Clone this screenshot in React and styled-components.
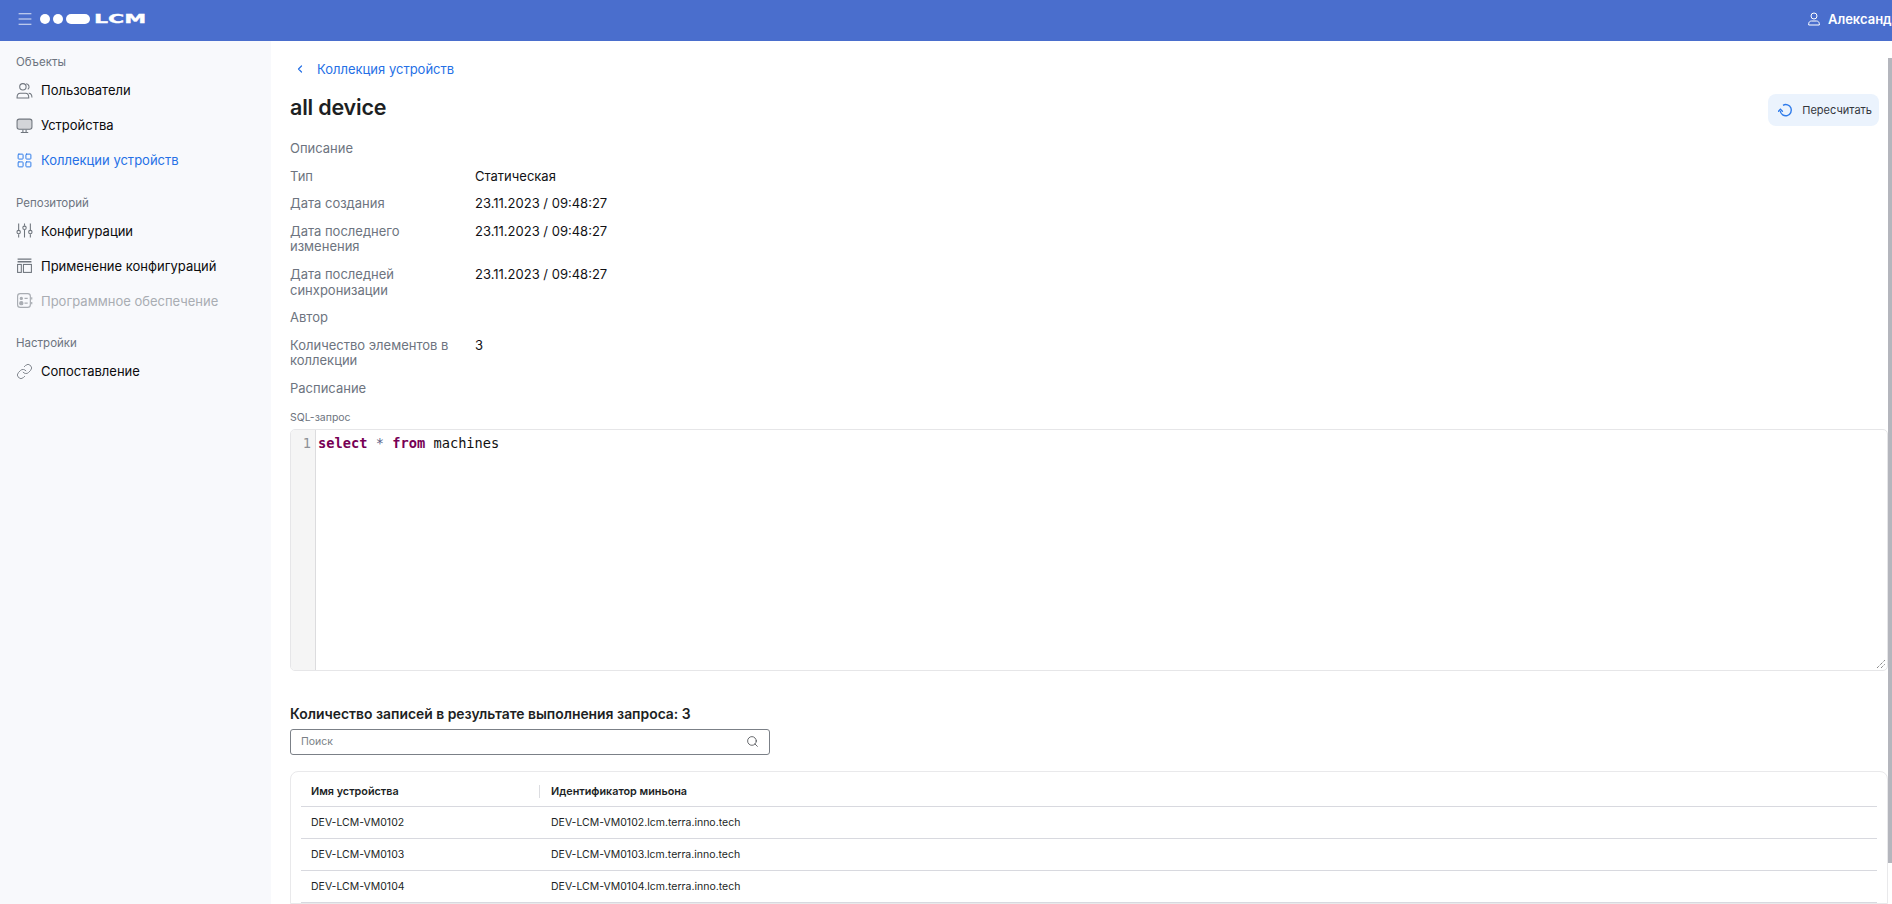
import { Fragment } from "react";
import styled, { createGlobalStyle } from "styled-components";
import { ChevronLeft, LayoutGrid, Link, Menu, Search } from "lucide-react";

const GlobalStyle = createGlobalStyle`
  html, body {
    margin: 0;
    height: 100%;
    overflow: hidden;
    background: #fff;
    font-family: Inter, "Noto Sans", sans-serif;
  }
`;

const Page = styled.div`
  display: flex;
  flex-direction: column;
  height: 904px;
  overflow: hidden;
`;

const TopBar = styled.header`
  flex: none;
  display: flex;
  justify-content: space-between;
  align-items: center;
  box-sizing: border-box;
  height: 41px;
  padding: 0 0 4px 16px;
  background: #4a6ecd;
  color: #fff;
  white-space: nowrap;
`;

const Brand = styled.div`
  display: flex;
  align-items: center;
  gap: 6px;
`;

const LogoMark = styled.div`
  display: flex;
  align-items: center;
  gap: 3px;
`;

const LogoDot = styled.span`
  width: ${(p) => p.$w}px;
  height: 10px;
  border-radius: 5px;
  background: #fff;
`;

const LogoText = styled.span`
  width: 34px;
  margin-left: 1px;
  font-family: "DejaVu Sans", sans-serif;
  font-size: 13px;
  font-weight: 700;
  line-height: 12px;
  -webkit-text-stroke: 0.3px #fff;
  transform: scaleX(1.7);
  transform-origin: left center;
`;

const UserBox = styled.div`
  display: flex;
  align-items: center;
  gap: 8px;
  width: 84px;
  overflow: hidden;
  font-size: 13px;
  font-weight: 600;

  svg {
    flex: none;
  }
`;

const Body = styled.div`
  flex: 1;
  display: flex;
  min-height: 0;
`;

const Sidebar = styled.aside`
  flex: none;
  width: 271px;
  box-sizing: border-box;
  padding: 14px 16px 0;
  background: #f8f9fc;
`;

const SectionLabel = styled.div`
  margin-bottom: 3.5px;
  color: #6d7480;
  font-size: 11.5px;
  line-height: 14px;
`;

const NavList = styled.nav`
  display: flex;
  flex-direction: column;
  margin-bottom: 18px;
`;

const NavItem = styled.a`
  display: flex;
  align-items: center;
  gap: 8px;
  height: 35px;
  color: ${(p) => (p.$active ? "#2570e6" : p.$disabled ? "#a9adb3" : "#0b0b0c")};
  font-size: 13px;
  white-space: nowrap;

  svg {
    flex: none;
    width: 17px;
    height: 17px;
    color: ${(p) => (p.$active ? "#2f7bea" : p.$disabled ? "#a9adb3" : "#6f757d")};
  }
`;

const Main = styled.main`
  flex: 1;
  display: flex;
  min-width: 0;
  background: #fff;
`;

const Content = styled.div`
  flex: 1;
  min-width: 0;
  padding: 19px 0 0 19px;
`;

const ScrollTrack = styled.div`
  flex: none;
  width: 4px;
  padding-top: 17px;
`;

const ScrollThumb = styled.div`
  height: 805px;
  background: #b4b6bd;
`;

const BackLink = styled.a`
  display: flex;
  align-items: center;
  gap: 11px;
  height: 18px;
  padding-left: 4px;
  color: #2570e6;
  font-size: 13px;
`;

const TitleRow = styled.div`
  display: flex;
  justify-content: space-between;
  align-items: flex-start;
  height: 51px;
  margin-top: 12px;
`;

const Title = styled.h1`
  margin: 0;
  padding-top: 1px;
  color: #1d1f23;
  font-size: 21.5px;
  font-weight: 600;
  line-height: 32px;
  letter-spacing: -0.2px;
`;

const RecalcButton = styled.button`
  display: flex;
  align-items: center;
  gap: 9px;
  height: 32px;
  margin: 4px 9px 0 0;
  padding: 0 7px 0 10px;
  border: 0;
  border-radius: 8px;
  background: #ebf3fd;
  color: #33373d;
  font-family: inherit;
  font-size: 11px;
  white-space: nowrap;
`;

const Details = styled.dl`
  display: grid;
  grid-template-columns: 185px 1fr;
  row-gap: 12px;
  margin: 0;
  font-size: 13px;
  line-height: 15.6px;
`;

const Term = styled.dt`
  width: 165px;
  color: #6d7480;
`;

const Value = styled.dd`
  margin: 0;
  color: #111215;
`;

const FieldLabel = styled.div`
  margin: 14px 0 5px;
  color: #6d7480;
  font-size: 10.5px;
  line-height: 13px;
`;

const Editor = styled.div`
  position: relative;
  display: flex;
  box-sizing: border-box;
  height: 242px;
  border: 1px solid #e6e6e8;
  border-radius: 5px;
  overflow: hidden;
`;

const Gutter = styled.div`
  flex: none;
  width: 20px;
  padding: 5px 4px 0 0;
  box-sizing: content-box;
  border-right: 1px solid #dcdcde;
  background: #f5f5f5;
  color: #8d9196;
  font-family: "DejaVu Sans Mono", monospace;
  font-size: 13.7px;
  line-height: 17px;
  text-align: right;
`;

const Code = styled.pre`
  margin: 0;
  padding: 5px 0 0 2px;
  color: #111;
  font-family: "DejaVu Sans Mono", monospace;
  font-size: 13.7px;
  line-height: 17px;
`;

const Keyword = styled.b`
  color: #770055;
`;

const Operator = styled.span`
  color: #5a5f88;
`;

const ResizeGrip = styled.svg`
  position: absolute;
  right: 1px;
  bottom: 1px;
`;

const SectionTitle = styled.h2`
  margin: 34px 0 6px;
  color: #1d1f23;
  font-size: 13.9px;
  font-weight: 600;
  line-height: 18px;
`;

const SearchBox = styled.label`
  display: flex;
  justify-content: space-between;
  align-items: center;
  box-sizing: border-box;
  width: 480px;
  height: 26px;
  padding: 0 10px;
  border: 1px solid #7b8087;
  border-radius: 3px;
  color: #7a7f86;
  font-size: 10.5px;

  svg {
    color: #3a3d42;
  }
`;

const TablePanel = styled.section`
  margin-top: 16px;
  padding: 0 10px;
  border: 1px solid #e9e9eb;
  border-radius: 8px 8px 0 0;
`;

const TableRow = styled.div`
  display: grid;
  grid-template-columns: 238px 1fr;
  align-items: center;
  box-sizing: border-box;
  height: ${(p) => (p.$head ? "35px" : "32px")};
  padding-top: ${(p) => (p.$head ? "6px" : "1px")};
  border-bottom: 1px solid #d8d9df;
  color: #1c1f25;
  font-size: ${(p) => (p.$head ? "10.8px" : "10.5px")};
  font-weight: ${(p) => (p.$head ? 600 : 400)};
`;

const Cell = styled.div`
  padding-left: ${(p) => (p.$wide ? "11px" : "10px")};
  line-height: 13px;
  border-left: 1px solid ${(p) => (p.$divider ? "#dcdde1" : "transparent")};
  margin-left: ${(p) => (p.$wide ? "0" : "-1px")};
`;

const UsersIcon = () => (
  <svg viewBox="0 0 16 16" fill="none" stroke="currentColor" strokeWidth="1">
    <circle cx="6.5" cy="4.5" r="3" />
    <path d="M9.5 1.6a3 3 0 0 1 1.6 5.4M1 14.5c0-2.5 1.5-4 3-4h5c1.5 0 3 1.5 3 4v.5H1zM12 10.5c1.6 0 3 1.5 3 4" />
  </svg>
);

const MonitorIcon = () => (
  <svg viewBox="0 0 16 16" fill="none" stroke="currentColor">
    <rect x="1" y="2" width="14" height="9.5" rx="2" fill="#d3d5d9" />
    <path d="M6.5 12v2.5M9.5 12v2.5M4.5 14.5h7" />
  </svg>
);

const SlidersIcon = () => (
  <svg viewBox="0 0 16 16" fill="none" stroke="currentColor" strokeWidth="1">
    <circle cx="2.5" cy="9.5" r="1.6" />
    <circle cx="8" cy="5.5" r="1.6" />
    <circle cx="13.5" cy="9.5" r="1.6" />
    <path d="M2.5 1.5v6M2.5 11.5v3M8 1.5v2M8 7.5v7M13.5 1.5v6M13.5 11.5v3" />
  </svg>
);

const ApplyIcon = () => (
  <svg viewBox="0 0 16 16" fill="none" stroke="currentColor" strokeWidth="1">
    <path d="M1.5 2h13M1.5 4.5h13" strokeWidth="1.4" />
    <rect x="1.5" y="7" width="3.5" height="7.5" />
    <rect x="7" y="7" width="7.5" height="7.5" />
  </svg>
);

const SoftwareIcon = () => (
  <svg viewBox="0 0 16 16" fill="none" stroke="currentColor" strokeWidth="1.1">
    <rect x="1.5" y="1.5" width="12" height="13" rx="2.5" />
    <circle cx="5" cy="6" r="1" fill="currentColor" />
    <circle cx="5" cy="10.5" r="1.5" fill="currentColor" />
    <path d="M8 6h3M8 10.5h3M14.8 5v2M14.8 9.5v2" />
  </svg>
);

const AccountIcon = () => (
  <svg width="12" height="14" viewBox="0 0 12 14" fill="none" stroke="currentColor" strokeWidth="1">
    <circle cx="6" cy="4" r="3" />
    <path d="M.7 13v-1.2c0-1.6 1.2-2.8 2.8-2.8h5c1.6 0 2.8 1.2 2.8 2.8V13z" />
  </svg>
);

const RecalcIcon = () => (
  <svg width="15" height="15" viewBox="0 0 15 15" fill="none" stroke="#2f7bea" strokeWidth="1.4">
    <path d="M5 2.3A5.6 5.6 0 1 1 2.2 8" />
    <path d="M.4 8.3l2-2 2 2" strokeLinecap="round" />
  </svg>
);

const navGroups = [
  {
    title: "Объекты",
    items: [
      { label: "Пользователи", icon: <UsersIcon /> },
      { label: "Устройства", icon: <MonitorIcon /> },
      { label: "Коллекции устройств", icon: <LayoutGrid strokeWidth={1.4} />, active: true },
    ],
  },
  {
    title: "Репозиторий",
    items: [
      { label: "Конфигурации", icon: <SlidersIcon /> },
      { label: "Применение конфигураций", icon: <ApplyIcon /> },
      { label: "Программное обеспечение", icon: <SoftwareIcon />, disabled: true },
    ],
  },
  {
    title: "Настройки",
    items: [{ label: "Сопоставление", icon: <Link strokeWidth={1.2} /> }],
  },
];

const stamp = "23.11.2023 / 09:48:27";

const details = [
  ["Описание", ""],
  ["Тип", "Статическая"],
  ["Дата создания", stamp],
  ["Дата последнего изменения", stamp],
  ["Дата последней синхронизации", stamp],
  ["Автор", ""],
  ["Количество элементов в коллекции", "3"],
  ["Расписание", ""],
];

const devices = ["DEV-LCM-VM0102", "DEV-LCM-VM0103", "DEV-LCM-VM0104"];

const App = () => {
  return (
    <Page>
      <GlobalStyle />
      <TopBar>
        <Brand>
          <Menu size={18} strokeWidth={1.1} />
          <LogoMark>
            <LogoDot $w={10} />
            <LogoDot $w={10} />
            <LogoDot $w={24} />
            <LogoText>LCM</LogoText>
          </LogoMark>
        </Brand>
        <UserBox>
          <AccountIcon />
          <span>Александр</span>
        </UserBox>
      </TopBar>
      <Body>
        <Sidebar>
          {navGroups.map((group) => (
            <div key={group.title}>
              <SectionLabel>{group.title}</SectionLabel>
              <NavList>
                {group.items.map((item) => (
                  <NavItem key={item.label} $active={item.active} $disabled={item.disabled}>
                    {item.icon}
                    {item.label}
                  </NavItem>
                ))}
              </NavList>
            </div>
          ))}
        </Sidebar>
        <Main>
          <Content>
            <BackLink>
              <ChevronLeft size={12} strokeWidth={2.4} />
              Коллекция устройств
            </BackLink>
            <TitleRow>
              <Title>all device</Title>
              <RecalcButton>
                <RecalcIcon />
                Пересчитать
              </RecalcButton>
            </TitleRow>
            <Details>
              {details.map(([term, value]) => (
                <Fragment key={term}>
                  <Term>{term}</Term>
                  <Value>{value}</Value>
                </Fragment>
              ))}
            </Details>
            <FieldLabel>SQL-запрос</FieldLabel>
            <Editor>
              <Gutter>1</Gutter>
              <Code>
                <Keyword>select</Keyword> <Operator>*</Operator> <Keyword>from</Keyword> machines
              </Code>
              <ResizeGrip width="10" height="10" viewBox="0 0 10 10" stroke="#555" strokeDasharray="1 1">
                <path d="M1 9l8-8M5 9l4-4" />
              </ResizeGrip>
            </Editor>
            <SectionTitle>Количество записей в результате выполнения запроса: 3</SectionTitle>
            <SearchBox>
              Поиск
              <Search size={13} strokeWidth={1.4} />
            </SearchBox>
            <TablePanel>
              <TableRow $head>
                <Cell>Имя устройства</Cell>
                <Cell $divider $wide>Идентификатор миньона</Cell>
              </TableRow>
              {devices.map((name) => (
                <TableRow key={name}>
                  <Cell>{name}</Cell>
                  <Cell $wide>{name}.lcm.terra.inno.tech</Cell>
                </TableRow>
              ))}
            </TablePanel>
          </Content>
          <ScrollTrack>
            <ScrollThumb />
          </ScrollTrack>
        </Main>
      </Body>
    </Page>
  );
};

export default App;
